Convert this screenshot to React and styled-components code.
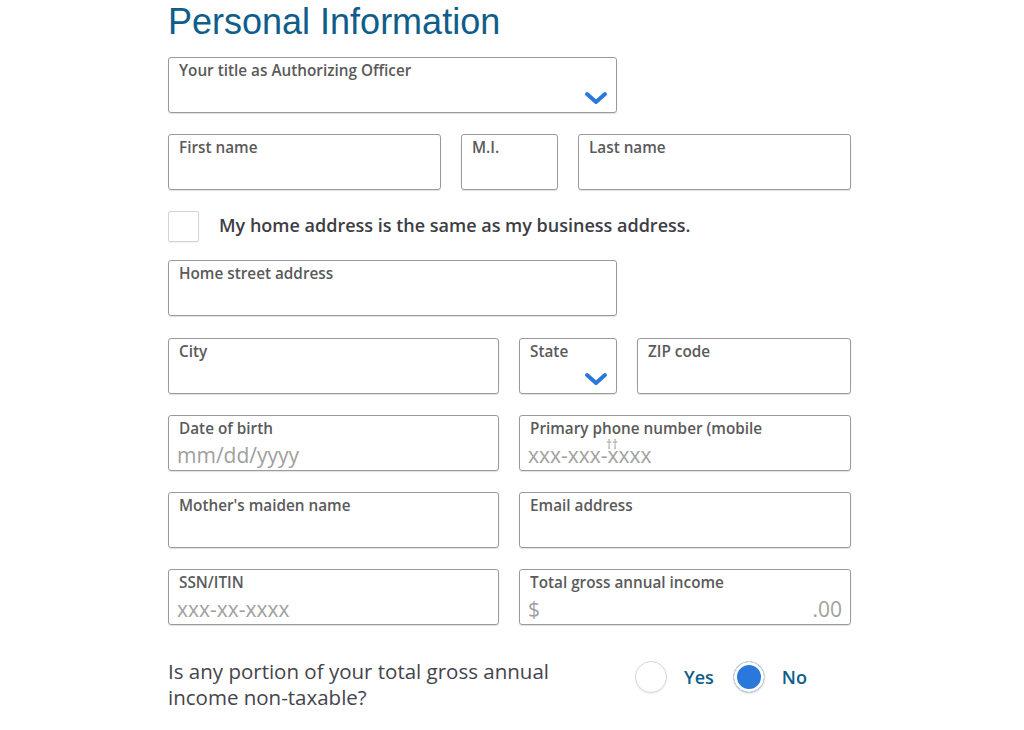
import React from 'react';
import styled, {createGlobalStyle} from 'styled-components';

const GlobalStyle = createGlobalStyle`
  body {
    margin: 0;
    background: #fff;
    font-family: "Open Sans", "Liberation Sans", sans-serif;
  }
`

const Page = styled.div`
  width: 1024px;
  height: 730px;
  padding-left: 168px;
  box-sizing: border-box;
  overflow: hidden;
`

const Title = styled.h1`
  margin: 1px 0 15px;
  font-family: "Liberation Sans", Arial, sans-serif;
  font-weight: 400;
  font-size: 36px;
  line-height: 41px;
  color: #0e5d8b;
`

const Form = styled.div`
  width: 683px;
  display: flex;
  flex-direction: column;
  gap: 21px;
`

const Row = styled.div`
  display: grid;
  grid-template-columns: ${p => p.$cols};
  column-gap: 20px;
  width: ${p => p.$width || '100%'};
  margin-top: ${p => p.$push || '0'};
`

const Field = styled.div`
  position: relative;
  height: 56px;
  box-sizing: border-box;
  border: 1px solid #9a9a9a;
  border-radius: 3px;
  box-shadow: 0 1px 1px rgba(0, 0, 0, 0.12);
  padding: 2px 8px 0 10px;
  display: flex;
  flex-direction: column;
`

const Label = styled.span`
  font-size: 15.3px;
  font-weight: 600;
  color: #5a5a5a;
  line-height: 21px;
  white-space: nowrap;
  overflow: hidden;
`

const Placeholder = styled.div`
  display: flex;
  justify-content: space-between;
  margin: 2px 0 0 -2px;
  font-size: 21px;
  line-height: 28px;
  color: #a0a0a0;
`

const Chevron = styled.svg`
  position: absolute;
  right: 8px;
  bottom: 7px;
`

const Marks = styled.span`
  position: absolute;
  left: 86px;
  top: 20px;
  font-size: 12px;
  color: #999;
`

const CheckRow = styled.label`
  display: flex;
  align-items: center;
  gap: 20px;
  margin: 0 0 -3px;
`

const Box = styled.span`
  width: 31px;
  height: 31px;
  box-sizing: border-box;
  border: 1px solid #d3d3d3;
  border-radius: 2px;
  box-shadow: 0 1px 1px rgba(0, 0, 0, 0.06);
`

const CheckText = styled.span`
  margin-top: -4px;
  font-size: 18px;
  font-weight: 600;
  color: #3d3d45;
`

const Question = styled.div`
  display: grid;
  grid-template-columns: 467px auto;
  align-items: start;
  margin-top: 12px;
`

const QuestionText = styled.p`
  margin: 0;
  width: 420px;
  font-size: 20.5px;
  line-height: 26px;
  color: #44444c;
`

const Options = styled.div`
  display: flex;
  align-items: center;
  gap: 19px;
  padding-top: 3px;
`

const Option = styled.label`
  display: flex;
  align-items: center;
  gap: 17px;
`

const Radio = styled.span`
  width: 32px;
  height: 32px;
  box-sizing: border-box;
  border-radius: 50%;
  border: 1px solid #d8d8d8;
  box-shadow: 0 1px 2px rgba(0, 0, 0, 0.08);
  background: ${p => (p.$checked ? '#2a78dc' : '#fff')};
  ${p => p.$checked && 'box-shadow: inset 0 0 0 3px #fff, 0 1px 2px rgba(0,0,0,0.1);'}
`

const OptionText = styled.span`
  font-size: 18px;
  font-weight: 600;
  color: #0e5d8b;
`

const Down = () => (
  <Chevron width="24" height="14" viewBox="0 0 24 14">
    <path d="M3 3 L12 11 L21 3" fill="none" stroke="#2a78dc" strokeWidth="4" strokeLinecap="round" strokeLinejoin="round"/>
  </Chevron>
)

const Input = ({label, placeholder, right, select, children}) => (
  <Field>
    <Label>{label}</Label>
    {(placeholder || right) && (
      <Placeholder>
        <span>{placeholder}</span>
        <span>{right}</span>
      </Placeholder>
    )}
    {select && <Down/>}
    {children}
  </Field>
)

export default function App() {
  return (
    <Page>
      <GlobalStyle/>
      <Title>Personal Information</Title>
      <Form>
        <Row $cols="1fr" $width="449px">
          <Input label="Your title as Authorizing Officer" select/>
        </Row>
        <Row $cols="273px 97px 273px">
          <Input label="First name"/>
          <Input label="M.I."/>
          <Input label="Last name"/>
        </Row>
        <CheckRow>
          <Box/>
          <CheckText>My home address is the same as my business address.</CheckText>
        </CheckRow>
        <Row $cols="1fr" $width="449px">
          <Input label="Home street address"/>
        </Row>
        <Row $cols="331px 98px 214px" $push="1px">
          <Input label="City"/>
          <Input label="State" select/>
          <Input label="ZIP code"/>
        </Row>
        <Row $cols="331px 332px">
          <Input label="Date of birth" placeholder="mm/dd/yyyy"/>
          <Input label="Primary phone number (mobile" placeholder="xxx-xxx-xxxx">
            <Marks>††</Marks>
          </Input>
        </Row>
        <Row $cols="331px 332px">
          <Input label="Mother's maiden name"/>
          <Input label="Email address"/>
        </Row>
        <Row $cols="331px 332px">
          <Input label="SSN/ITIN" placeholder="xxx-xx-xxxx"/>
          <Input label="Total gross annual income" placeholder="$" right=".00"/>
        </Row>
        <Question>
          <QuestionText>Is any portion of your total gross annual income non-taxable?</QuestionText>
          <Options>
            <Option>
              <Radio/>
              <OptionText>Yes</OptionText>
            </Option>
            <Option>
              <Radio $checked/>
              <OptionText>No</OptionText>
            </Option>
          </Options>
        </Question>
      </Form>
    </Page>
  )
}
